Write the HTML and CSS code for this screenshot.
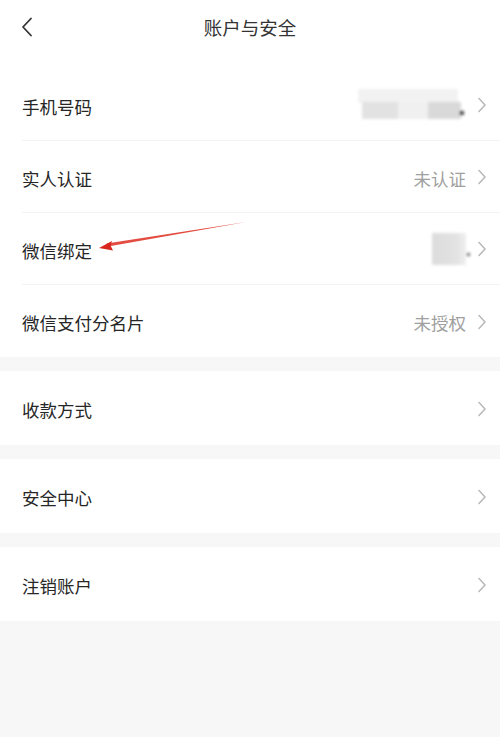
FILE: index.html
```html
<!DOCTYPE html>
<html lang="zh-CN">
<head>
    <meta charset="UTF-8">
    <meta name="viewport" content="width=device-width, initial-scale=1.0">
    <title>账户与安全</title>
    <link rel="stylesheet" href="styles.css">
</head>
<body>
    <div class="page">
        <div class="top">
            <div class="header">
                <svg class="back" width="12" height="20" viewBox="0 0 12 20">
                    <path d="M10 1.5 L2 10 L10 18.5" fill="none" stroke="#333" stroke-width="1.8" stroke-linecap="round" stroke-linejoin="round"/>
                </svg>
                <div class="title">账户与安全</div>
            </div>

            <div class="group">
                <div class="row">
                    <span class="label">手机号码</span>
                    <span class="value">
                        <span class="mask phone">
                            <i class="b1"></i><i class="b2"></i><i class="b3"></i><i class="b4"></i><i class="b5"></i>
                        </span>
                    </span>
                    <svg class="chev" width="10" height="16" viewBox="0 0 10 16"><path d="M2 1.5 L8 8 L2 14.5" fill="none" stroke="#b8b8b8" stroke-width="1.5" stroke-linecap="round" stroke-linejoin="round"/></svg>
                </div>
                <div class="row">
                    <span class="label">实人认证</span>
                    <span class="value">未认证</span>
                    <svg class="chev" width="10" height="16" viewBox="0 0 10 16"><path d="M2 1.5 L8 8 L2 14.5" fill="none" stroke="#b8b8b8" stroke-width="1.5" stroke-linecap="round" stroke-linejoin="round"/></svg>
                </div>
                <div class="row">
                    <span class="label">微信绑定</span>
                    <span class="value">
                        <span class="mask avatar"><i></i></span>
                    </span>
                    <svg class="chev" width="10" height="16" viewBox="0 0 10 16"><path d="M2 1.5 L8 8 L2 14.5" fill="none" stroke="#b8b8b8" stroke-width="1.5" stroke-linecap="round" stroke-linejoin="round"/></svg>
                </div>
                <div class="row">
                    <span class="label">微信支付分名片</span>
                    <span class="value">未授权</span>
                    <svg class="chev" width="10" height="16" viewBox="0 0 10 16"><path d="M2 1.5 L8 8 L2 14.5" fill="none" stroke="#b8b8b8" stroke-width="1.5" stroke-linecap="round" stroke-linejoin="round"/></svg>
                </div>
            </div>
        </div>

        <div class="group single">
            <div class="row">
                <span class="label">收款方式</span>
                <svg class="chev" width="10" height="16" viewBox="0 0 10 16"><path d="M2 1.5 L8 8 L2 14.5" fill="none" stroke="#b8b8b8" stroke-width="1.5" stroke-linecap="round" stroke-linejoin="round"/></svg>
            </div>
        </div>

        <div class="group single">
            <div class="row">
                <span class="label">安全中心</span>
                <svg class="chev" width="10" height="16" viewBox="0 0 10 16"><path d="M2 1.5 L8 8 L2 14.5" fill="none" stroke="#b8b8b8" stroke-width="1.5" stroke-linecap="round" stroke-linejoin="round"/></svg>
            </div>
        </div>

        <div class="group single">
            <div class="row">
                <span class="label">注销账户</span>
                <svg class="chev" width="10" height="16" viewBox="0 0 10 16"><path d="M2 1.5 L8 8 L2 14.5" fill="none" stroke="#b8b8b8" stroke-width="1.5" stroke-linecap="round" stroke-linejoin="round"/></svg>
            </div>
        </div>

        <!-- annotation arrow drawn over the screenshot -->
        <svg class="annot" width="500" height="300" viewBox="0 0 500 300">
            <path d="M246 222 L108 246.5 L106.5 243.5 Z" fill="#e0382c" opacity="0.9"/>
            <path d="M99 248 L112 241 L110.5 245.5 L113 250.5 Z" fill="#d8261c"/>
        </svg>
    </div>
</body>
</html>
```

FILE: styles.css
```css
html, body {
    margin: 0;
    padding: 0;
}

body {
    font-family: "Noto Sans CJK SC", "Noto Sans", sans-serif;
    background: #f7f7f7;
    color: #333;
}

.page {
    position: relative;
    width: 500px;
    height: 737px;
    overflow: hidden;
}

.top {
    background: #fff;
}

.header {
    position: relative;
    height: 56px;
    margin-bottom: 13px;
    display: flex;
    align-items: center;
    justify-content: center;
}

.header .back {
    position: absolute;
    left: 21px;
    top: 17px;
}

.title {
    font-size: 18.5px;
    color: #333;
    margin-top: -2px;
}

.group {
    background: #fff;
}

.group.single {
    margin-top: 14px;
}

.row {
    height: 72px;
    display: flex;
    align-items: center;
    margin-left: 22px;
    padding-right: 13px;
    padding-top: 3px;
    border-bottom: 1px solid #f3f3f3;
    box-sizing: border-box;
}

.group .row:last-child {
    border-bottom: none;
}

.group.single .row {
    height: 74px;
}

.label {
    font-size: 17.5px;
    color: #262626;
    flex: 1;
}

.value {
    font-size: 17.5px;
    color: #a0a0a0;
    margin-right: 11px;
    display: flex;
    align-items: center;
}

.chev {
    display: block;
    margin-top: -2px;
}

/* blurred personal data */
.mask {
    position: relative;
    display: block;
    filter: blur(1.5px);
}

.mask i {
    position: absolute;
    display: block;
}

.mask.phone {
    width: 108px;
    height: 32px;
    margin-top: -2px;
}

.mask.phone .b1 { left: 0; top: 0; width: 100px; height: 14px; background: #f2f2f2; }
.mask.phone .b2 { left: 4px; top: 13px; width: 36px; height: 17px; background: #e2e2e2; }
.mask.phone .b3 { left: 40px; top: 13px; width: 30px; height: 17px; background: #f0f0f0; }
.mask.phone .b4 { left: 70px; top: 13px; width: 33px; height: 17px; background: #d9d9d9; }
.mask.phone .b5 { left: 102px; top: 22px; width: 4px; height: 4px; background: #444; }

.mask.avatar {
    width: 34px;
    height: 32px;
    margin-top: -2px;
    background: linear-gradient(90deg, #dcdcdc, #e2e2e2 70%, #efefef);
}

.mask.avatar i {
    left: 35px;
    top: 20px;
    width: 3px;
    height: 3px;
    background: #666;
}

.annot {
    position: absolute;
    left: 0;
    top: 0;
    pointer-events: none;
}
```
